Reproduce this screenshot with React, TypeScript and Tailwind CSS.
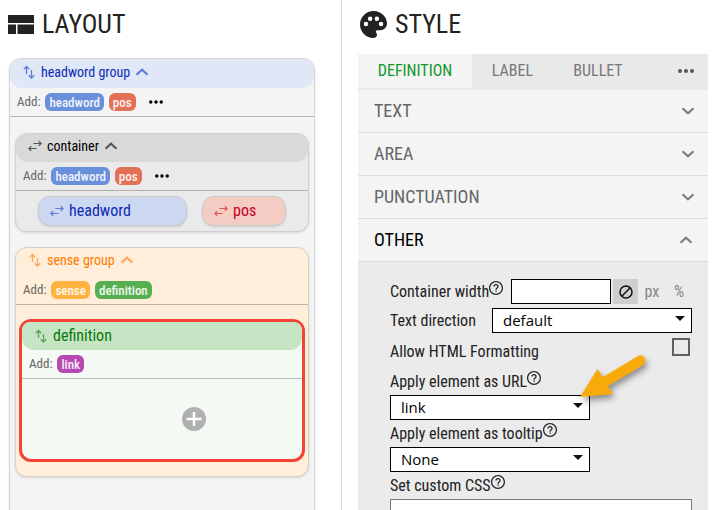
import type { ReactNode } from "react";

function Horizontal({ className = "" }: { className?: string }) {
  return (
    <svg className={`h-[14px] w-[14px] shrink-0 ${className}`} viewBox="0 0 14 14" fill="none" stroke="currentColor" strokeWidth="1.2" aria-hidden="true">
      <path d="M5.500 4.500H13M1 9.500H8.500M10.800 2.200L13.200 4.500L10.800 6.800M3.200 7.200L0.800 9.500L3.200 11.800" />
    </svg>
  );
}

function Vertical({ className = "" }: { className?: string }) {
  return (
    <svg className={`h-[14px] w-[14px] shrink-0 ${className}`} viewBox="0 0 14 14" fill="none" stroke="currentColor" strokeWidth="1.3" aria-hidden="true">
      <path d="M4.500 2V9M9.500 5V12.500M1.800 4.200L4.500 1.500L7.200 4.200M6.800 10.300L9.500 13L12.200 10.300" />
    </svg>
  );
}

function Chevron({ up = false, className = "" }: { up?: boolean; className?: string }) {
  return (
    <svg className={`h-[8px] w-[14px] shrink-0 ${className}`} viewBox="0 0 14 8" fill="none" stroke="currentColor" strokeWidth="2.2" aria-hidden="true">
      <path d={up ? "M1.500 6.800L7 1.800L12.500 6.800" : "M1.500 1.200L7 6.200L12.500 1.200"} />
    </svg>
  );
}

function Dots({ className = "" }: { className?: string }) {
  return (
    <svg className={`shrink-0 ${className}`} viewBox="0 0 16 4" fill="currentColor" aria-hidden="true">
      <circle cx="2" cy="2" r="2" />
      <circle cx="8" cy="2" r="2" />
      <circle cx="14" cy="2" r="2" />
    </svg>
  );
}

function Help() {
  return (
    <svg className="mb-[8px] h-[14px] w-[14px] shrink-0" viewBox="0 0 24 24" fill="#222" role="img" aria-label="Help">
      <path d="M11 18.500h2.200v-2.200h-2.200v2.200zm1-18.500C5.400 0 0 5.400 0 12s5.400 12 12 12 12-5.400 12-12S18.600 0 12 0zm0 21.800c-5.400 0-9.800-4.400-9.800-9.800S6.600 2.200 12 2.200s9.800 4.400 9.800 9.800-4.400 9.800-9.800 9.800zM12 5c-2.600 0-4.600 2-4.600 4.600h2.300c0-1.300 1-2.300 2.300-2.300s2.300 1 2.300 2.300c0 2.200-3.400 2-3.400 5.400h2.300c0-2.400 3.400-2.700 3.400-5.400C16.600 7 14.600 5 12 5z" />
    </svg>
  );
}

function Tag({ color, children }: { color: string; children: ReactNode }) {
  return (
    <button type="button" className={`h-[18px] rounded-md px-1 text-[13px] leading-[17px] font-medium text-white/90 ${color}`}>
      {children}
    </button>
  );
}

function AddRow({ children }: { children: ReactNode }) {
  return (
    <div className="flex h-[29px] items-center gap-[5px] border-b border-black/25 px-[7px] text-[13px] text-[#666]">
      <span>Add:</span>
      {children}
    </div>
  );
}

function More() {
  return (
    <button type="button" aria-label="More" className="ml-2 text-black">
      <Dots className="h-[4px] w-[14px]" />
    </button>
  );
}

function Select({ id, options, className }: { id: string; options: string[]; className: string }) {
  return (
    <div className={`relative ${className}`}>
      <select id={id} className="block h-[25px] w-full appearance-none border border-black bg-white px-[10px] font-['Open_Sans','Noto_Sans',sans-serif] text-[15px] leading-[23px] text-black">
        {options.map((o) => (
          <option key={o}>{o}</option>
        ))}
      </select>
      <svg className="pointer-events-none absolute top-2 right-[7px] h-[5px] w-[10px]" viewBox="0 0 10 5" fill="#111" aria-hidden="true">
        <path d="M0 0H10L5 5Z" />
      </svg>
    </div>
  );
}

function Field({ id, children }: { id: string; children: string }) {
  return (
    <label htmlFor={id} className="flex h-[26px] items-center">
      {children}
      <Help />
    </label>
  );
}

function LayoutPane() {
  return (
    <section className="min-w-0 border-r border-[#d8d8d8] pr-[26px] pl-[9px]">
      <h1 className="flex h-[58px] items-center gap-2 pb-[9px] text-[26px] text-[#222]">
        <svg className="-ml-px h-[19px] w-[26px]" viewBox="0 0 26 19" fill="currentColor" aria-hidden="true">
          <path d="M0 0H26V8H0ZM0 9.500H8V19H0ZM9.500 9.500H26V19H9.500Z" />
        </svg>
        LAYOUT
      </h1>
      <div className="h-[470px] rounded-t-xl border border-[#d6d6d6] bg-[#f4f4f4] shadow-sm">
        <header className="flex h-[29px] items-center gap-[5px] rounded-xl bg-[#e0e7f7] px-[12px] pb-1 text-sm text-[#0f2bb5]">
          <Vertical className="text-[#5b7bd6]" />
          headword group
          <Chevron up className="h-[7px] w-[11px] text-[#5b7bd6]" />
        </header>
        <AddRow>
          <Tag color="bg-[#6a8fdb]">headword</Tag>
          <Tag color="bg-[#e27056]">pos</Tag>
          <More />
        </AddRow>
        <div className="flex flex-col gap-[15px] px-[5px] pt-4">
          <div className="h-[99px] rounded-xl border border-[#d0d0d0] bg-[#eaeaea] shadow-sm">
            <header className="flex h-[28px] items-center gap-[5px] rounded-xl bg-[#d9d9d9] px-[12px] pb-1 text-sm text-black">
              <Horizontal className="text-[#555]" />
              container
              <Chevron up className="h-[7px] w-[11px] text-[#555]" />
            </header>
            <AddRow>
              <Tag color="bg-[#6a8fdb]">headword</Tag>
              <Tag color="bg-[#e27056]">pos</Tag>
              <More />
            </AddRow>
            <div className="grid grid-cols-[149fr_84fr] gap-[15px] px-[22px] pt-[5px] text-base">
              <div className="flex h-[30px] items-center gap-[5px] rounded-xl border border-[#ccc] bg-[#ccd8f2] px-[11px] text-[#0f2bb5] shadow-sm">
                <Horizontal className="text-[#5b7bd6]" />
                headword
              </div>
              <div className="flex h-[30px] items-center gap-[5px] rounded-xl border border-[#ccc] bg-[#f5ccc4] px-[11px] text-[#c8001e] shadow-sm">
                <Horizontal className="text-[#e0554d]" />
                pos
              </div>
            </div>
          </div>
          <div className="h-[230px] rounded-xl border border-[#d8cfc4] bg-[#ffeed9] shadow-sm">
            <header className="flex h-[28px] items-center gap-[5px] px-[12px] pb-1 text-sm text-[#ff7800]">
              <Vertical className="text-[#ffa55a]" />
              sense group
              <Chevron up className="h-[7px] w-[11px] text-[#ffa55a]" />
            </header>
            <AddRow>
              <Tag color="bg-[#ffb340]">sense</Tag>
              <Tag color="bg-[#56b053]">definition</Tag>
            </AddRow>
            <div className="mx-[3px] mt-[14px] h-[143px] rounded-xl border-[3px] border-[#f44336] bg-[#f2faf3]">
              <header className="flex h-[28px] items-center gap-[5px] rounded-t-lg rounded-b-xl bg-[#c5e5c5] px-[12px] text-base text-[#087a08]">
                <Vertical className="text-[#55a555]" />
                definition
              </header>
              <AddRow>
                <Tag color="bg-[#b648b3]">link</Tag>
              </AddRow>
              <div className="flex h-20 items-center justify-center pl-16">
                <button type="button" aria-label="Add element">
                  <svg className="h-6 w-6" viewBox="0 0 24 24" aria-hidden="true">
                    <circle cx="12" cy="12" r="12" fill="#b0b0b0" />
                    <path d="M4.500 12H19.500M12 5V19" stroke="#fff" strokeWidth="2.500" />
                  </svg>
                </button>
              </div>
            </div>
          </div>
        </div>
      </div>
    </section>
  );
}

function StylePane() {
  return (
    <section className="min-w-0 pr-[6px] pl-4">
      <h1 className="flex h-[54px] items-center gap-2 pb-[5px] pl-[2px] text-[26px] text-[#222]">
        <svg className="h-[27px] w-[27px]" viewBox="0 0 24 24" fill="currentColor" aria-hidden="true">
          <path fillRule="evenodd" d="M12 0C5.400 0 0 5.400 0 12s5.400 12 12 12c1.900 0 3.100-1.500 3.100-3 0-.9-.5-1.500-.8-2-.7-1 .1-2 1.200-2H18c3.300 0 6-2.700 6-6C24 5 18.600 0 12 0ZM5.300 13.500a2 2 0 1 1 0-4a2 2 0 0 1 0 4ZM9 8.800a2 2 0 1 1 0-4a2 2 0 0 1 0 4ZM15 8.800a2 2 0 1 1 0-4a2 2 0 0 1 0 4ZM18.700 13.500a2 2 0 1 1 0-4a2 2 0 0 1 0 4Z" />
        </svg>
        STYLE
      </h1>
      <nav className="flex h-[36px] border-b-2 border-[#e9e9e9] bg-[#e9e9e9] text-base text-[#777]">
        <button type="button" className="w-[114px] bg-[#f4f4f4] text-[#10962a]">DEFINITION</button>
        <button type="button" className="w-[81px]">LABEL</button>
        <button type="button" className="w-[90px]">BULLET</button>
        <button type="button" aria-label="More tabs" className="ml-auto pr-[14px] text-[#555]">
          <Dots className="h-[4px] w-[16px]" />
        </button>
      </nav>
      {["TEXT", "AREA", "PUNCTUATION", "OTHER"].map((name) => (
        <button
          key={name}
          type="button"
          aria-expanded={name === "OTHER"}
          className={`flex h-[43px] w-full items-center justify-between border-b border-[#dcdcdc] bg-[#f4f4f4] pl-4 text-lg ${name === "OTHER" ? "pr-[15px] text-black" : "pr-[13px] text-[#666]"}`}
        >
          {name}
          <Chevron up={name === "OTHER"} className="text-[#7c7c7c]" />
        </button>
      ))}
      <form className="bg-[#ebebeb] pt-[17px] pr-4 pl-8 text-base text-[#222]">
        <div className="flex h-[25px] items-center">
          <Field id="width">Container width</Field>
          <input id="width" type="text" className="ml-auto h-[25px] w-[100px] border border-black bg-white" />
          <button type="button" aria-label="No width" className="ml-[2px] flex h-[25px] w-[25px] items-center justify-center bg-[#cfcfcf]">
            <svg className="h-[14px] w-[14px]" viewBox="0 0 14 14" fill="none" stroke="#111" strokeWidth="1.500" aria-hidden="true">
              <circle cx="7" cy="7" r="6" />
              <path d="M2.800 11.200L11.200 2.800" />
            </svg>
          </button>
          <button type="button" className="w-[28px] text-[#888]">px</button>
          <button type="button" className="w-[26px] text-[#888]">%</button>
        </div>
        <div className="mt-[3px] flex items-center justify-between">
          <label htmlFor="direction" className="pt-[2px]">Text direction</label>
          <Select id="direction" options={["default", "ltr", "rtl"]} className="w-[200px]" />
        </div>
        <div className="flex h-9 items-center justify-between pr-[2px]">
          <label htmlFor="html" className="pt-[2px]">Allow HTML Formatting</label>
          <input id="html" type="checkbox" className="mb-2 h-[18px] w-[18px] appearance-none border-2 border-[#606060]" />
        </div>
        <div className="relative w-[200px]">
          <Field id="url">Apply element as URL</Field>
          <Select id="url" options={["link", "None"]} className="w-full" />
          <svg className="pointer-events-none absolute -top-4 left-[186px] h-[54px] w-[74px] drop-shadow-[2px_4px_3px_rgba(0,0,0,0.4)]" viewBox="0 0 74 54" aria-hidden="true">
            <path d="M4 44L21.500 16L27 24L62 3C68 0 72 8 67 12L32 33L37 41Z" fill="#f9aa0b" />
          </svg>
        </div>
        <div className="mt-[1px] w-[200px]">
          <Field id="tooltip">Apply element as tooltip</Field>
          <Select id="tooltip" options={["None", "link"]} className="w-full" />
        </div>
        <div className="mt-[1px]">
          <Field id="css">Set custom CSS</Field>
          <textarea id="css" className="block h-20 w-full resize-none border border-[#777] bg-white" />
        </div>
      </form>
    </section>
  );
}

export default function App() {
  return (
    <main className="grid h-screen grid-cols-[342fr_372fr] overflow-hidden bg-white font-['Roboto_Condensed','Liberation_Sans_Narrow',Roboto,sans-serif]">
      <LayoutPane />
      <StylePane />
    </main>
  );
}
